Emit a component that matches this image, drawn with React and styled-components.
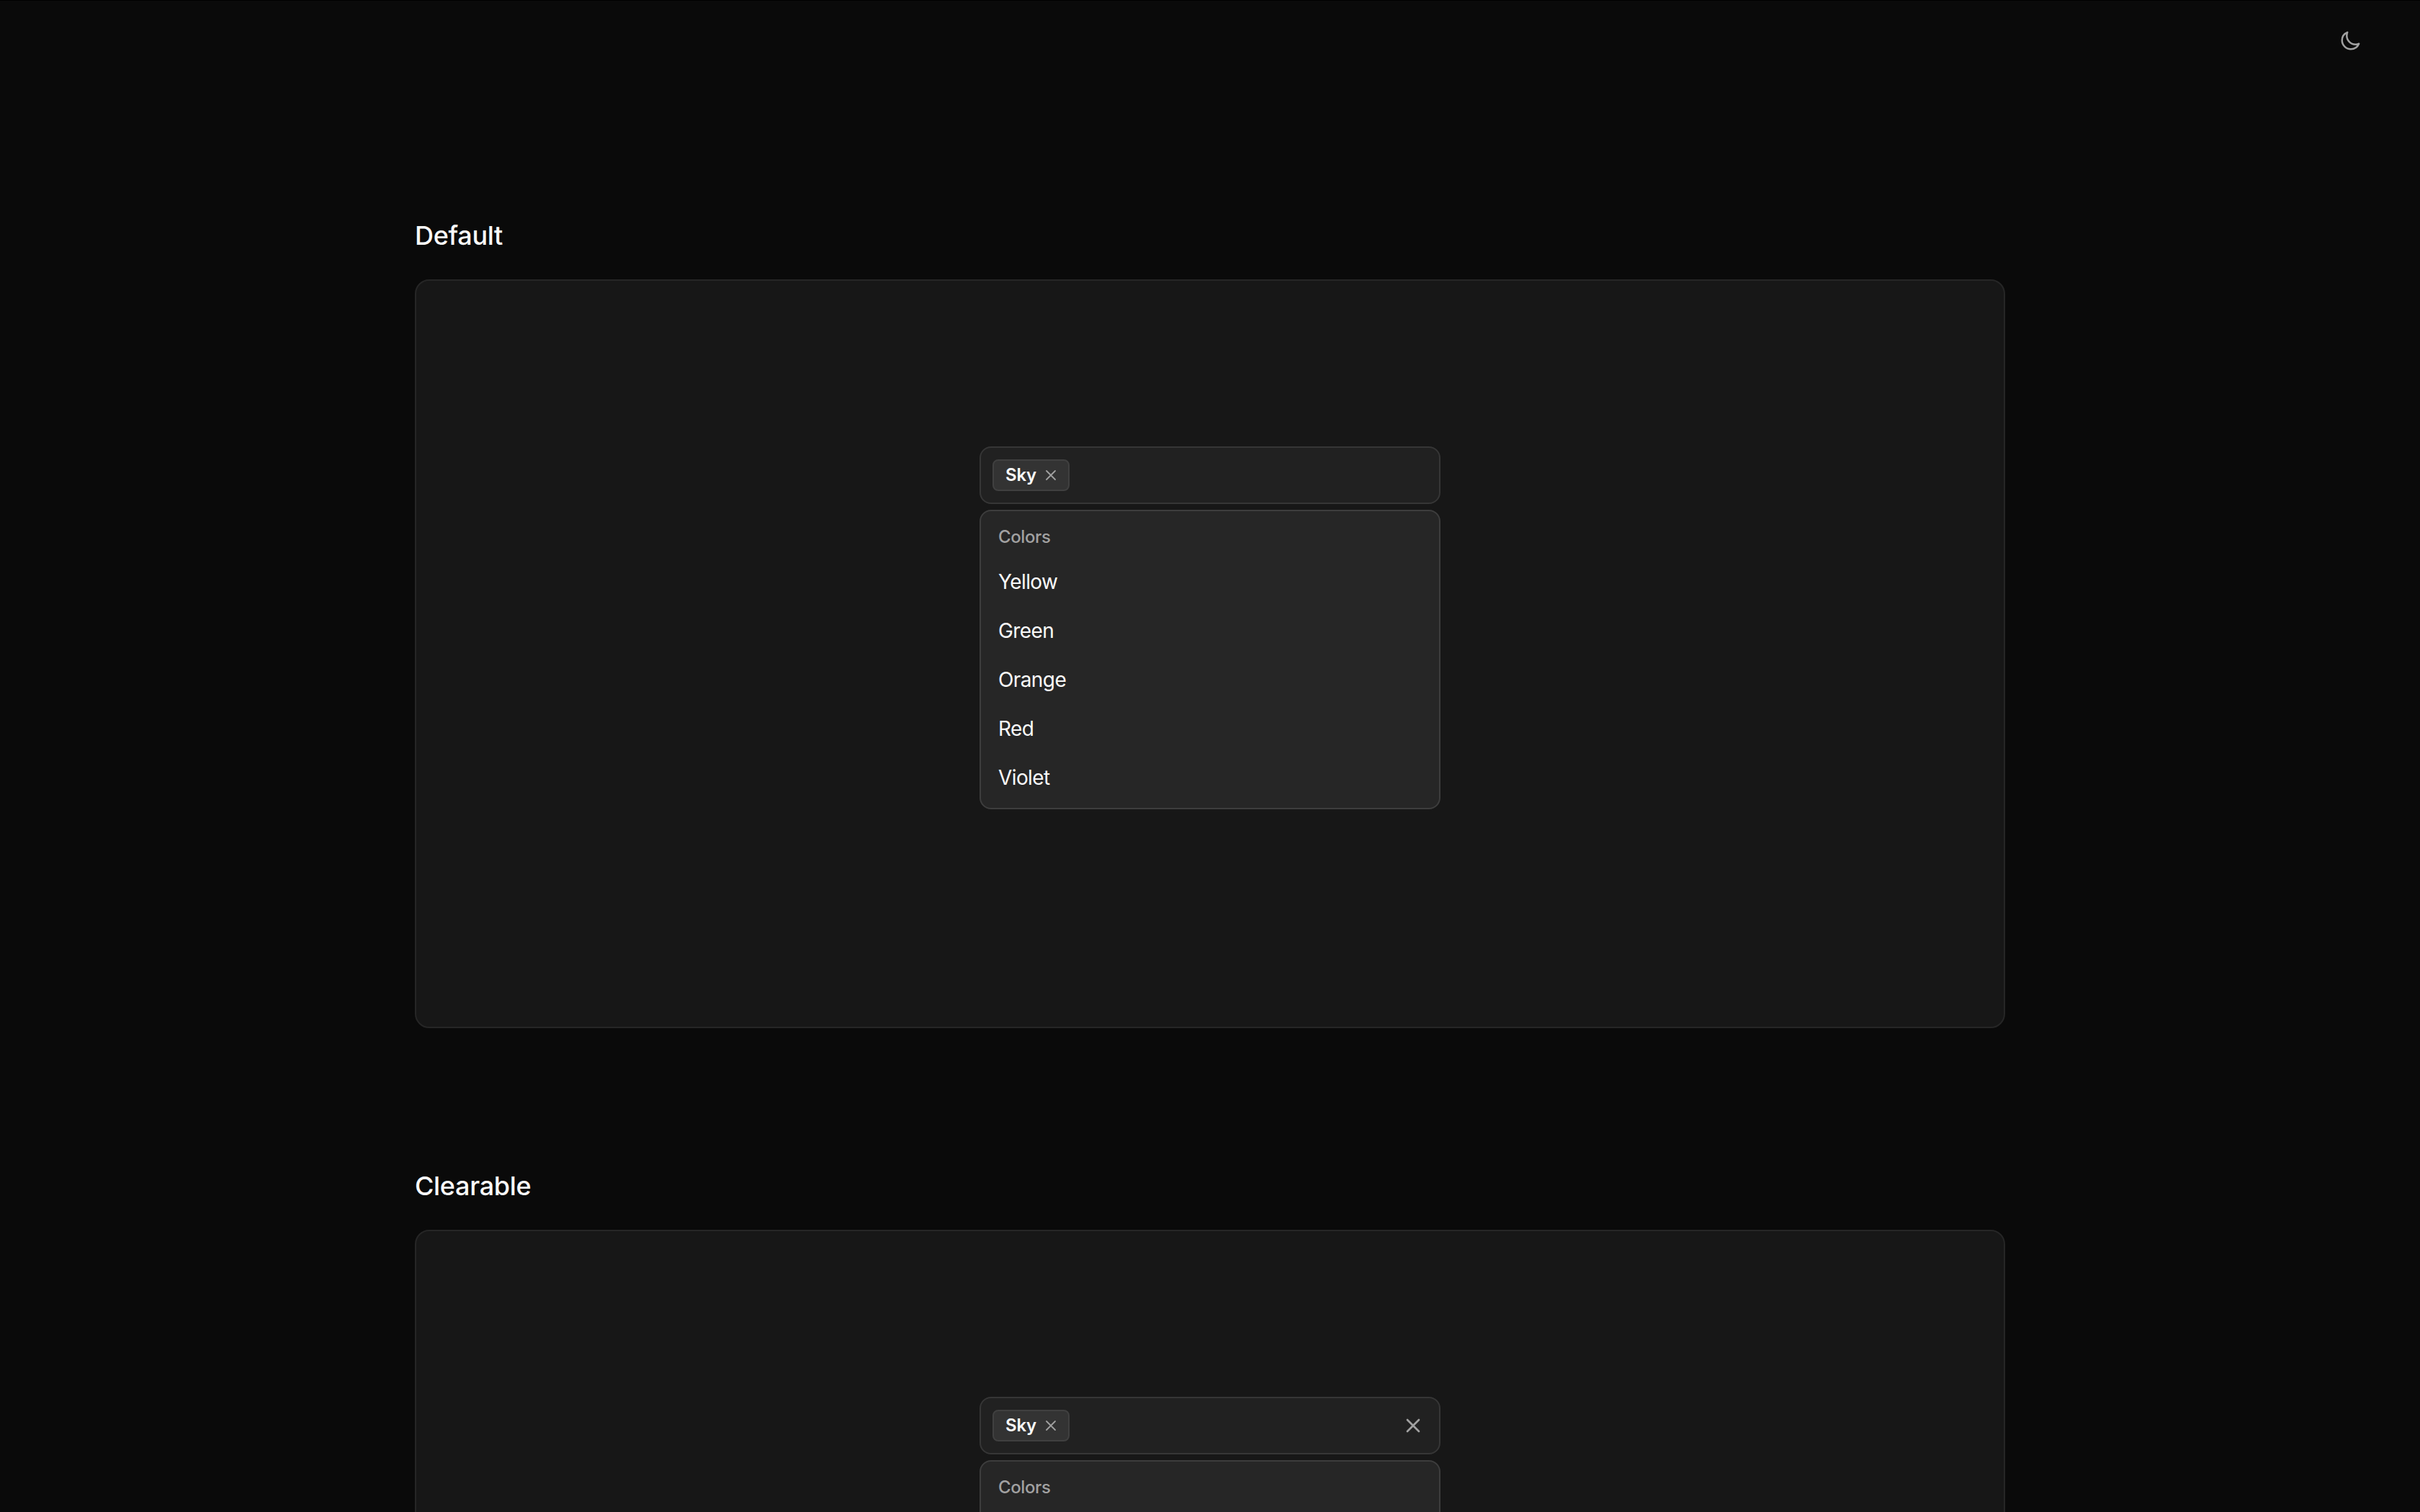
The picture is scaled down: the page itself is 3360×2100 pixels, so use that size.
import React, { Fragment } from "react";
import styled, { createGlobalStyle } from "styled-components";

const GlobalStyle = createGlobalStyle`
    * {
        box-sizing: border-box;
    }

    body {
        margin: 0;
        height: 2100px;
        overflow: hidden;
        background: #0a0a0a;
        color: #fafafa;
        font-family: Inter, "Liberation Sans", sans-serif;
        -webkit-font-smoothing: antialiased;
    }
`;

const Page = styled.div`
    height: 2100px;
    overflow: hidden;
    border-top: 1px solid #000;
`;

const Header = styled.header`
    display: flex;
    justify-content: flex-end;
    height: 112px;
    padding: 40.5px 82px 0 0;
`;

const ThemeButton = styled.button`
    display: flex;
    width: 30px;
    height: 30px;
    padding: 0;
    border: 0;
    background: none;
    color: #a1a1a1;
`;

const Main = styled.main`
    width: 2208px;
    margin: 0 auto;
    padding-top: 187px;
`;

const Section = styled.section`
    margin-bottom: 192px;
`;

const Title = styled.h2`
    margin: 0 0 34px;
    font-size: 36px;
    font-weight: 500;
    line-height: 54px;
    letter-spacing: -0.3px;
`;

const Card = styled.div`
    display: flex;
    justify-content: center;
    height: 1040px;
    padding-top: 230px;
    border: 2px solid #262626;
    border-radius: 20px;
    background: #171717;
`;

const Select = styled.div`
    display: flex;
    flex-direction: column;
    gap: 8px;
    width: 640px;
`;

const Field = styled.div`
    display: flex;
    align-items: center;
    justify-content: space-between;
    height: 80px;
    padding: 0 20px 0 16px;
    border: 2px solid #363636;
    border-radius: 16px;
    background: #212121;
    color: #a1a1a1;
`;

const Tag = styled.span`
    display: flex;
    align-items: center;
    gap: 6px;
    width: 107px;
    height: 44px;
    padding-left: 16px;
    border: 2px solid #404040;
    border-radius: 8px;
    background: #333333;
`;

const TagLabel = styled.span`
    width: 45px;
    color: #fafafa;
    font-size: 24px;
    font-weight: 600;
    line-height: 32px;
    letter-spacing: -0.2px;
`;

const Menu = styled.div`
    height: 416px;
    padding: 8px;
    border: 2px solid #3d3d3d;
    border-radius: 16px;
    background: #262626;
`;

const GroupLabel = styled.div`
    padding: 0 16px;
    color: #a1a1a1;
    font-size: 24px;
    font-weight: 500;
    line-height: 56px;
    letter-spacing: -0.4px;
`;

const Option = styled.div`
    padding: 14px 16px;
    font-size: 28px;
    line-height: 40px;
    letter-spacing: -0.6px;
`;

const colors = ["Yellow", "Green", "Orange", "Red", "Violet"];

const MoonIcon = () => (
    <svg width="30" height="30" viewBox="0 0 24 24" fill="none" stroke="currentColor" strokeWidth="2" strokeLinecap="round" strokeLinejoin="round">
        <path d="M21.752 15.002A9.72 9.72 0 0 1 18 15.75c-5.385 0-9.75-4.365-9.75-9.75 0-1.33.266-2.597.748-3.752A9.753 9.753 0 0 0 3 11.25C3 16.635 7.365 21 12.75 21a9.753 9.753 0 0 0 9.002-5.998Z" />
    </svg>
);

const CloseIcon = ({ size, stroke }) => (
    <svg width={size} height={size} viewBox="0 0 24 24" fill="none" stroke="currentColor" strokeWidth={stroke} strokeLinecap="round">
        <path d="M18 6 6 18M6 6l12 12" />
    </svg>
);

const MultiSelect = ({ clearable, options = [] }) => {
    return (
        <Select>
            <Field>
                <Tag>
                    <TagLabel>Sky</TagLabel>
                    <CloseIcon size={24} stroke={1.8} />
                </Tag>
                {clearable && <CloseIcon size={32} stroke={2} />}
            </Field>
            <Menu>
                <GroupLabel>Colors</GroupLabel>
                {options.map((option) => (
                    <Option key={option}>{option}</Option>
                ))}
            </Menu>
        </Select>
    );
}

const App = () => {
    return (
        <Fragment>
            <GlobalStyle />
            <Page>
                <Header>
                    <ThemeButton>
                        <MoonIcon />
                    </ThemeButton>
                </Header>
                <Main>
                    <Section>
                        <Title>Default</Title>
                        <Card>
                            <MultiSelect options={colors} />
                        </Card>
                    </Section>
                    <Section>
                        <Title>Clearable</Title>
                        <Card>
                            <MultiSelect clearable />
                        </Card>
                    </Section>
                </Main>
            </Page>
        </Fragment>
    );
}

export default App;
